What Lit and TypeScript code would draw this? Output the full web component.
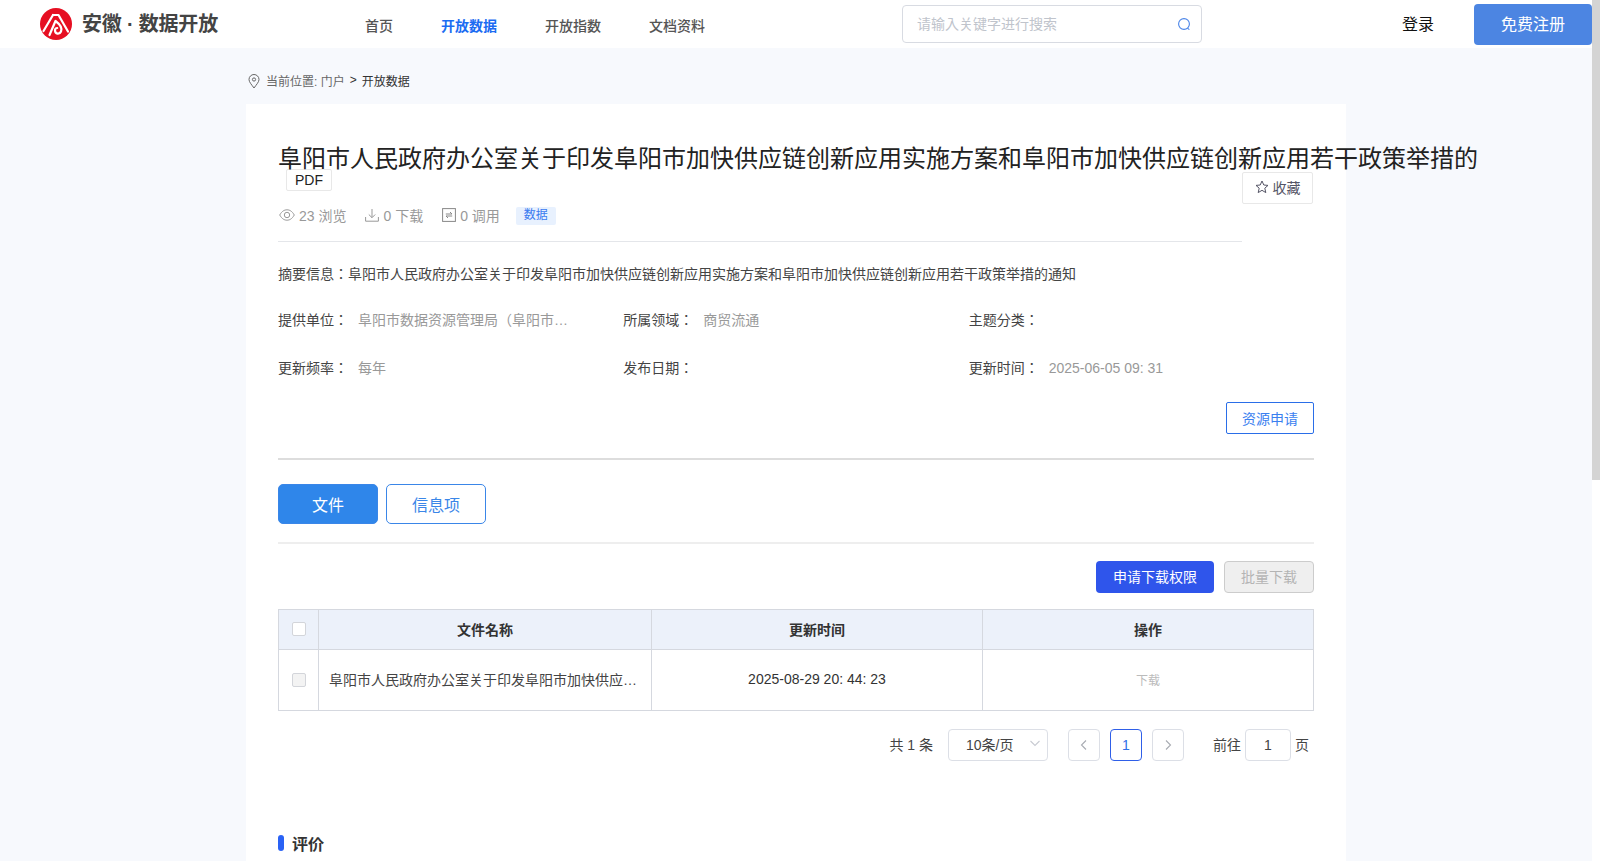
import { LitElement, html, css, svg } from 'lit';
import { customElement } from 'lit/decorators.js';

const TITLE = '阜阳市人民政府办公室关于印发阜阳市加快供应链创新应用实施方案和阜阳市加快供应链创新应用若干政策举措的';

const META = [
  { label: '提供单位：', value: '阜阳市数据资源管理局（阜阳市…' },
  { label: '所属领域：', value: '商贸流通' },
  { label: '主题分类：', value: '' },
  { label: '更新频率：', value: '每年' },
  { label: '发布日期：', value: '' },
  { label: '更新时间：', value: '2025-06-05 09: 31' },
];

const NAV = ['首页', '开放数据', '开放指数', '文档资料'];

const chevron = (d: string) => html`<svg width="14" height="14" viewBox="0 0 14 14" fill="none" stroke="currentColor" stroke-width="1.1"><path d=${d}></path></svg>`;

const logo = svg`
  <circle cx="16" cy="16" r="16" fill="#e60f22"></circle>
  <g fill="none" stroke="#fff" stroke-width="2.2" stroke-linecap="round" stroke-linejoin="round">
    <path d="M3.5 23 L13 7"></path>
    <path d="M13 7 L18.5 7 L28 23.5"></path>
    <path d="M9.5 27 L15.5 13 C19.5 16 22.5 20 21 23.5 C19.5 26.8 15 26 15 22.5 C15 20.8 16.2 20 17.2 20"></path>
  </g>
`;

@customElement('app-root')
export class AppRoot extends LitElement {
  static styles = css`
    :host {
      display: flex;
      height: 100vh;
      overflow: hidden;
      font-family: "Liberation Sans", "Noto Sans CJK JP", sans-serif;
      color: #444;
      font-size: 14px;
      background: #fff;
    }
    .page {
      flex: 1;
      min-width: 0;
      overflow: hidden;
      background: #f7f9fd;
    }
    .rail {
      width: 8px;
      flex: none;
    }
    .thumb {
      height: 480px;
      background: #d4d4d4;
    }

    /* cabecera */
    .header {
      display: flex;
      align-items: center;
      height: 48px;
      background: #fff;
    }
    .brand {
      display: flex;
      align-items: center;
      gap: 10px;
      width: 365px;
      padding-left: 40px;
      box-sizing: border-box;
      flex: none;
    }
    .brand svg {
      display: block;
      flex: none;
    }
    .brand-name {
      padding-bottom: 4px;
      font-size: 20px;
      font-weight: 700;
      letter-spacing: -0.2px;
      color: #444;
      white-space: nowrap;
    }
    .nav {
      display: flex;
      gap: 48px;
      width: 341px;
      flex: none;
      margin-top: 2px;
    }
    .nav span {
      color: #555;
      font-weight: 500;
      white-space: nowrap;
    }
    .nav .active {
      color: #1c6cf2;
      font-weight: 700;
    }
    .search {
      display: flex;
      align-items: center;
      justify-content: space-between;
      width: 300px;
      height: 38px;
      margin-left: 196px;
      padding: 0 10px 0 14px;
      box-sizing: border-box;
      border: 1px solid #d8dbe2;
      border-radius: 4px;
      flex: none;
    }
    .search input {
      border: 0;
      outline: 0;
      padding: 0;
      width: 240px;
      font: inherit;
    }
    .search input::placeholder {
      color: #c0c4cc;
    }
    .search svg {
      color: #4b85e8;
    }
    .login {
      margin-left: 200px;
      padding-bottom: 3px;
      font-size: 16px;
      color: #111;
      flex: none;
    }
    .register {
      width: 118px;
      height: 41px;
      margin-left: 40px;
      padding-bottom: 3px;
      border: 0;
      border-radius: 4px;
      background: #4c85e2;
      color: #fff;
      font: inherit;
      font-size: 16px;
      flex: none;
    }

    .container {
      width: 1100px;
      margin: 0 auto;
    }
    .crumb {
      display: flex;
      align-items: center;
      gap: 5px;
      height: 56px;
      padding-top: 8px;
      box-sizing: border-box;
      font-size: 12px;
      color: #666;
    }
    .crumb svg {
      margin: 2px 1px 0 2px;
    }
    .crumb b {
      font-weight: 400;
      color: #333;
    }

    .card {
      min-height: 1450px;
      padding: 43px 32px 0;
      box-sizing: border-box;
      background: #fff;
    }
    .head {
      display: flex;
    }
    .head-main {
      width: 964px;
      flex: none;
      border-bottom: 1px solid #e4e6ea;
      padding-bottom: 16px;
    }
    .title {
      margin-bottom: -2px;
      font-size: 24px;
      line-height: 24px;
      color: #222;
      white-space: nowrap;
    }
    .type-tag {
      width: 46px;
      height: 22px;
      margin-left: 8px;
      line-height: 20px;
      text-align: center;
      box-sizing: border-box;
      border: 1px solid #e8e8e8;
      border-radius: 2px;
      color: #222;
    }
    .stats {
      display: flex;
      align-items: center;
      height: 20px;
      margin-top: 14px;
      color: #999;
    }
    .stat {
      display: flex;
      align-items: center;
      gap: 4px;
      margin-right: 18px;
      padding-left: 1px;
    }
    .data-tag {
      width: 40px;
      height: 18px;
      margin: 2px 0 0 -2px;
      line-height: 16px;
      text-align: center;
      font-size: 12px;
      color: #3b7bf0;
      background: #e8f1fe;
      border-radius: 2px;
    }
    .fav {
      display: flex;
      align-items: center;
      justify-content: center;
      gap: 4px;
      width: 71px;
      height: 32px;
      margin-top: 25px;
      padding-bottom: 2px;
      border: 1px solid #e8e8e8;
      border-radius: 2px;
      box-sizing: border-box;
      color: #556;
      flex: none;
    }
    .summary {
      margin-top: 22px;
      line-height: 20px;
    }
    .meta {
      display: grid;
      grid-template-columns: repeat(3, 1fr);
      row-gap: 28px;
      margin-top: 26px;
      line-height: 20px;
    }
    .meta-item {
      display: flex;
    }
    .meta-item label {
      width: 80px;
      flex: none;
    }
    .meta-item span {
      color: #999;
      white-space: nowrap;
    }
    .actions {
      display: flex;
      justify-content: flex-end;
      margin-top: 24px;
      padding-bottom: 24px;
      border-bottom: 2px solid #ddd;
    }
    .btn-outline {
      width: 88px;
      height: 32px;
      box-sizing: border-box;
      border: 1px solid #2a6ee8;
      border-radius: 2px;
      background: #fff;
      color: #3b7ff0;
      font: inherit;
    }
    .tabs {
      display: flex;
      gap: 8px;
      margin-top: 24px;
      padding-bottom: 18px;
      border-bottom: 2px solid #eee;
    }
    .tab {
      width: 100px;
      height: 40px;
      box-sizing: border-box;
      border: 1px solid #3a86e8;
      border-radius: 5px;
      background: #fff;
      color: #3a86e8;
      font: inherit;
      font-size: 16px;
    }
    .tab.on {
      background: #2f86ea;
      color: #fff;
    }
    .tools {
      display: flex;
      justify-content: flex-end;
      gap: 10px;
      margin-top: 17px;
    }
    .tools button {
      height: 32px;
      padding-bottom: 3px;
      box-sizing: border-box;
      border-radius: 4px;
      font: inherit;
    }
    .apply {
      width: 118px;
      border: 0;
      background: #2f55eb;
      color: #fff;
    }
    .batch {
      width: 90px;
      border: 1px solid #ccc;
      background: #efefef;
      color: #b4b4b4;
    }

    table {
      width: 1035px;
      margin-top: 16px;
      table-layout: fixed;
      border-collapse: collapse;
    }
    th, td {
      border: 1px solid #d5d8df;
      text-align: center;
      padding: 0;
    }
    th {
      height: 40px;
      padding-bottom: 2px;
      box-sizing: border-box;
      background: #ecf1fa;
      font-weight: 700;
      color: #333;
    }
    td {
      height: 58px;
    }
    td.name {
      padding: 0 0 2px 10px;
      text-align: left;
      white-space: nowrap;
    }
    td.time {
      padding-bottom: 2px;
      color: #333;
    }
    td.down {
      padding-bottom: 2px;
      font-size: 12px;
      color: #bbb;
    }
    .check {
      display: block;
      width: 14px;
      height: 14px;
      margin: 0 auto;
      box-sizing: border-box;
      border: 1px solid #d3d5da;
      border-radius: 2px;
      background: #fff;
    }
    td .check {
      background: #f3f3f3;
    }

    .pager {
      display: flex;
      align-items: center;
      justify-content: flex-end;
      height: 32px;
      margin-top: 18px;
      padding-right: 5px;
    }
    .total {
      margin-right: 15px;
      padding-bottom: 2px;
    }
    .size {
      display: flex;
      align-items: center;
      justify-content: space-between;
      width: 100px;
      height: 32px;
      margin-right: 20px;
      padding: 0 5px 2px 17px;
      box-sizing: border-box;
      border: 1px solid #dcdfe6;
      border-radius: 4px;
      color: #444;
    }
    .size svg {
      color: #c8cbd2;
      margin-top: -3px;
    }
    .page-btn {
      display: flex;
      align-items: center;
      justify-content: center;
      width: 32px;
      height: 32px;
      box-sizing: border-box;
      border: 1px solid #dcdfe6;
      border-radius: 4px;
      color: #a8abb2;
    }
    .page-btn.cur {
      margin: 0 10px;
      border-color: #2f5fe8;
      color: #2f6fe8;
    }
    .goto {
      margin-left: 29px;
      margin-right: 4px;
      padding-bottom: 2px;
    }
    .jump {
      width: 46px;
      height: 32px;
      padding: 0;
      box-sizing: border-box;
      border: 1px solid #dcdfe6;
      border-radius: 4px;
      text-align: center;
      font: inherit;
      color: #444;
      margin-right: 4px;
    }
    .unit {
      padding-bottom: 2px;
    }

    .section {
      display: flex;
      align-items: center;
      gap: 8px;
      height: 24px;
      margin-top: 70px;
      font-size: 16px;
      font-weight: 700;
      color: #333;
    }
    .section i {
      width: 6px;
      height: 16px;
      border-radius: 3px;
      background: #2a62f5;
    }
  `;

  render() {
    return html`
      <div class="page">
        <header class="header">
          <div class="brand">
            <svg width="32" height="32" viewBox="0 0 32 32">${logo}</svg>
            <span class="brand-name">安徽 · 数据开放</span>
          </div>
          <nav class="nav">
            ${NAV.map((n) => html`<span class=${n === '开放数据' ? 'active' : ''}>${n}</span>`)}
          </nav>
          <div class="search">
            <input placeholder="请输入关键字进行搜索" />
            <svg width="14" height="14" viewBox="0 0 14 14" fill="none" stroke="currentColor" stroke-width="1.1">
              <circle cx="7" cy="7" r="5.4"></circle>
              <path d="M10.5 11.2 L12.4 12.6"></path>
            </svg>
          </div>
          <span class="login">登录</span>
          <button class="register">免费注册</button>
        </header>

        <div class="container">
          <div class="crumb">
            <svg width="12" height="15" viewBox="0 0 12 15" fill="none" stroke="#666" stroke-width="1">
              <path d="M6 14 C3.5 10.5 1 8 1 5.5 A5 5 0 0 1 11 5.5 C11 8 8.5 10.5 6 14 Z"></path>
              <circle cx="6" cy="5.5" r="1.6"></circle>
            </svg>
            <span>当前位置: 门户</span>
            <b>&gt;</b>
            <b>开放数据</b>
          </div>

          <main class="card">
            <div class="head">
              <div class="head-main">
                <div class="title">${TITLE}</div>
                <div class="type-tag">PDF</div>
                <div class="stats">
                  <span class="stat">
                    <svg width="16" height="12" viewBox="0 0 16 12" fill="none" stroke="#999" stroke-width="1">
                      <path d="M0.7 6 C3 2 5.5 0.8 8 0.8 C10.5 0.8 13 2 15.3 6 C13 10 10.5 11.2 8 11.2 C5.5 11.2 3 10 0.7 6 Z"></path>
                      <circle cx="8" cy="6" r="2.7"></circle>
                    </svg>
                    23 浏览
                  </span>
                  <span class="stat">
                    <svg width="14" height="14" viewBox="0 0 14 14" fill="none" stroke="#999" stroke-width="1">
                      <path d="M7 1 V9.5 M3.8 6.5 L7 9.7 L10.2 6.5"></path>
                      <path d="M0.6 9 V13.2 H13.4 V9"></path>
                    </svg>
                    0 下载
                  </span>
                  <span class="stat">
                    <svg width="14" height="14" viewBox="0 0 14 14" fill="none" stroke="#888" stroke-width="1">
                      <rect x="0.6" y="0.6" width="12.8" height="12.8"></rect>
                      <path d="M3.8 6 H10 L8 4 M10.2 8 H4 L6 10"></path>
                    </svg>
                    0 调用
                  </span>
                  <span class="data-tag">数据</span>
                </div>
              </div>
              <div class="fav">
                <svg width="14" height="14" viewBox="0 0 14 14" fill="none" stroke="#556" stroke-width="1" stroke-linejoin="round">
                  <path d="M7 1 L8.8 5 L13 5.4 L9.8 8.2 L10.8 12.6 L7 10.3 L3.2 12.6 L4.2 8.2 L1 5.4 L5.2 5 Z"></path>
                </svg>
                收藏
              </div>
            </div>

            <div class="summary">摘要信息：阜阳市人民政府办公室关于印发阜阳市加快供应链创新应用实施方案和阜阳市加快供应链创新应用若干政策举措的通知</div>

            <div class="meta">
              ${META.map((m) => html`
                <div class="meta-item"><label>${m.label}</label><span>${m.value}</span></div>
              `)}
            </div>

            <div class="actions"><button class="btn-outline">资源申请</button></div>

            <div class="tabs">
              <button class="tab on">文件</button>
              <button class="tab">信息项</button>
            </div>

            <div class="tools">
              <button class="apply">申请下载权限</button>
              <button class="batch">批量下载</button>
            </div>

            <table>
              <colgroup>
                <col style="width:40px" />
                <col style="width:333px" />
                <col style="width:331px" />
                <col style="width:331px" />
              </colgroup>
              <thead>
                <tr>
                  <th><span class="check"></span></th>
                  <th>文件名称</th>
                  <th>更新时间</th>
                  <th>操作</th>
                </tr>
              </thead>
              <tbody>
                <tr>
                  <td><span class="check"></span></td>
                  <td class="name">阜阳市人民政府办公室关于印发阜阳市加快供应…</td>
                  <td class="time">2025-08-29 20: 44: 23</td>
                  <td class="down">下载</td>
                </tr>
              </tbody>
            </table>

            <div class="pager">
              <span class="total">共 1 条</span>
              <div class="size">
                <span>10条/页</span>
                ${chevron('M2.5 5 L7 9.5 L11.5 5')}
              </div>
              <span class="page-btn">${chevron('M9 2.5 L4.5 7 L9 11.5')}</span>
              <span class="page-btn cur">1</span>
              <span class="page-btn">${chevron('M5 2.5 L9.5 7 L5 11.5')}</span>
              <span class="goto">前往</span>
              <input class="jump" value="1" />
              <span class="unit">页</span>
            </div>

            <div class="section"><i></i>评价</div>
          </main>
        </div>
      </div>
      <div class="rail"><div class="thumb"></div></div>
    `;
  }
}
